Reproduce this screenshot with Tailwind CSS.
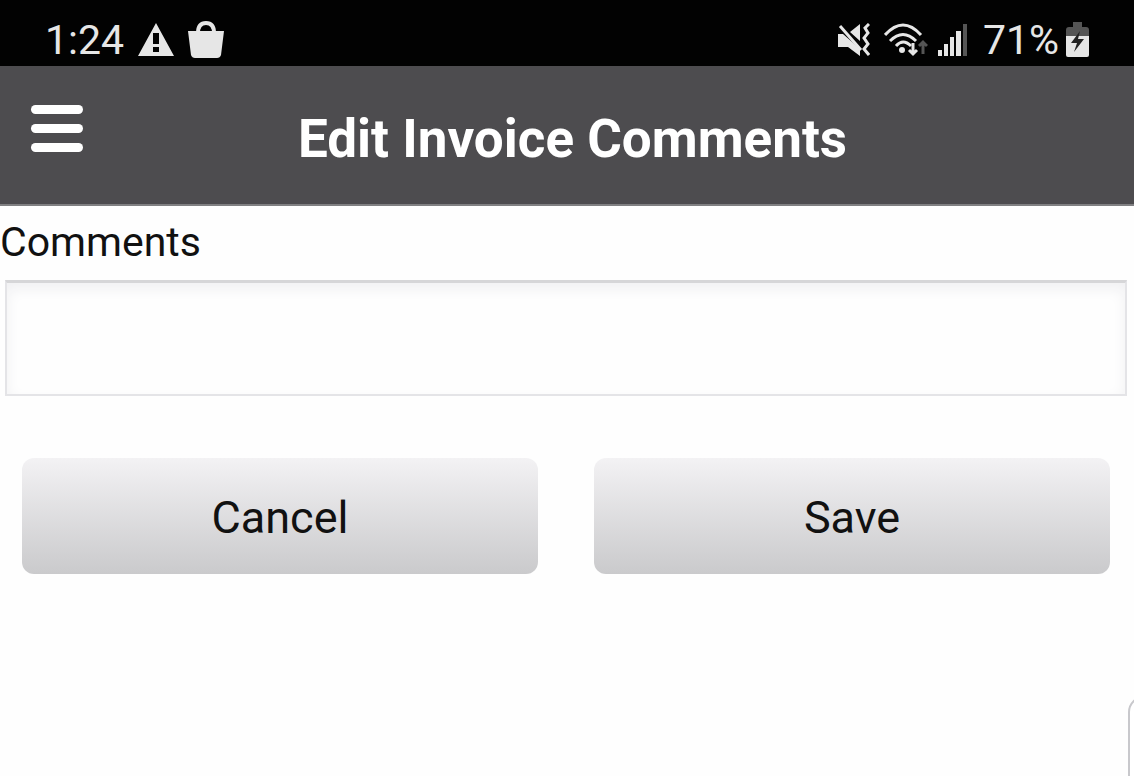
<!DOCTYPE html>
<html lang="en">

<head>
    <meta charset="UTF-8" />
    <meta name="viewport" content="width=device-width, initial-scale=1.0" />
    <title>Edit Invoice Comments</title>
    <script src="https://cdn.jsdelivr.net/npm/@tailwindcss/browser@4"></script>
</head>

<body class="relative flex min-h-screen flex-col overflow-x-hidden bg-[#fefefe] font-[Roboto,sans-serif] text-[#111]">
    <!-- Status bar -->
    <div class="flex h-[66px] items-center justify-between bg-[#020202] px-[45px] pt-[14px] text-[#e6e6e6]">
        <div class="flex items-center gap-[14px]">
            <span class="text-[41px] leading-[52px]">1:24</span>
            <svg class="h-[34px] w-[36px]" viewBox="0 0 36 34" fill="currentColor" aria-hidden="true">
                <path fill-rule="evenodd" d="M18 0 36 33H0ZM15 10v11h6V10ZM15 24v5h6v-5Z" />
            </svg>
            <svg class="h-[38px] w-[36px]" viewBox="0 0 36 38" fill="currentColor" aria-hidden="true">
                <path d="M10 12C10 5 13 2 18 2s8 3 8 10" fill="none" stroke="currentColor" stroke-width="4" />
                <path d="M0 10h36l-3 24q-1 3-4 3H7q-3 0-4-3Z" />
            </svg>
        </div>
        <div class="flex items-center">
            <!-- muted, vibrate -->
            <svg class="mr-[14px] h-[34px] w-[32px]" viewBox="0 0 32 34" fill="none" stroke="currentColor" aria-hidden="true">
                <path d="M0 11h5L22 26v7L10 24H0ZM12 9 22 1v17Z" fill="currentColor" stroke="none" />
                <path d="M2 3 23 27" stroke-width="3" />
                <path d="M31 1l-4 4 3 5-4 5 4 6-4 5 5 6" stroke-width="3" />
            </svg>
            <!-- wifi with traffic arrows -->
            <svg class="mr-[10px] h-[34px] w-[44px]" viewBox="0 0 44 34" fill="none" stroke="currentColor" stroke-width="3" aria-hidden="true">
                <path d="M1 12Q19-8 37 12M6 18Q19 5 32 18M12 23q7-8 15 0" />
                <circle cx="18" cy="27" r="3" fill="currentColor" stroke="none" />
                <path d="M29 20v11M25 27l4 4 4-4" />
                <path d="M39 31V20M35 23l4-4 4 4" stroke="#555" />
            </svg>
            <svg class="mr-[15px] h-[34px] w-[30px]" viewBox="0 0 30 34" fill="currentColor" aria-hidden="true">
                <path d="M0 27h4v6H0ZM6 21h4v12H6ZM12 14h4v19h-4ZM18 8h5v25h-5Z" />
                <path d="M25 1h4v32h-4Z" fill="#555" />
            </svg>
            <span class="mr-[7px] text-[41px] leading-[52px]">71%</span>
            <svg class="h-[36px] w-[23px]" viewBox="0 0 23 36" aria-hidden="true">
                <path d="M7 0h9v5h4q3 0 3 3v8H0V8q0-3 3-3h4Z" fill="#555" />
                <path d="M0 14h23v19q0 2-2 2H2q-2 0-2-2Z" fill="currentColor" />
                <path d="M14 9 5 21h6l-3 9 10-13h-6Z" fill="#222" />
            </svg>
        </div>
    </div>

    <header class="grid h-[140px] grid-cols-[1fr_auto_1fr] items-center border-b-2 border-[#808082] bg-[#4d4c4f] pr-5 pl-[31px]">
        <button type="button" aria-label="Menu" class="mb-[14px] flex w-[52px] flex-col gap-[10px]">
            <span class="h-[9px] w-full rounded-full bg-white"></span>
            <span class="h-[9px] w-full rounded-full bg-white"></span>
            <span class="h-[9px] w-full rounded-full bg-white"></span>
        </button>
        <h1 class="pt-2 text-[53px] leading-[60px] font-bold text-white">Edit Invoice Comments</h1>
    </header>

    <main>
        <form>
            <label for="comments" class="block pt-[10px] text-[41px] leading-[52px]">Comments</label>
            <div class="pt-3 pr-[7px] pl-[5px]">
                <input type="text" id="comments" name="comments"
                    class="block h-[116px] w-full border-2 border-t-3 border-[#e4e4e7] border-t-[#d6d6d8] bg-[#fefefe] px-4 text-[41px] shadow-[inset_0_6px_14px_#f0f0f2] outline-none" />
            </div>
            <div class="grid grid-cols-2 gap-14 pt-[62px] pr-6 pl-[22px]">
                <button type="button"
                    class="h-[116px] rounded-[12px] bg-linear-to-b from-[#f3f2f4] to-[#cacacc] pt-1 text-[45px] leading-[56px]">Cancel</button>
                <button type="submit"
                    class="h-[116px] rounded-[12px] bg-linear-to-b from-[#f3f2f4] to-[#cacacc] pt-1 text-[45px] leading-[56px]">Save</button>
            </div>
        </form>
    </main>

    <!-- Edge of the side panel -->
    <div class="absolute right-0 bottom-0 h-[80px] w-[6px] overflow-hidden">
        <div class="h-[120px] w-[60px] rounded-tl-[16px] border-2 border-[#c8c8cc] bg-white"></div>
    </div>
</body>

</html>
